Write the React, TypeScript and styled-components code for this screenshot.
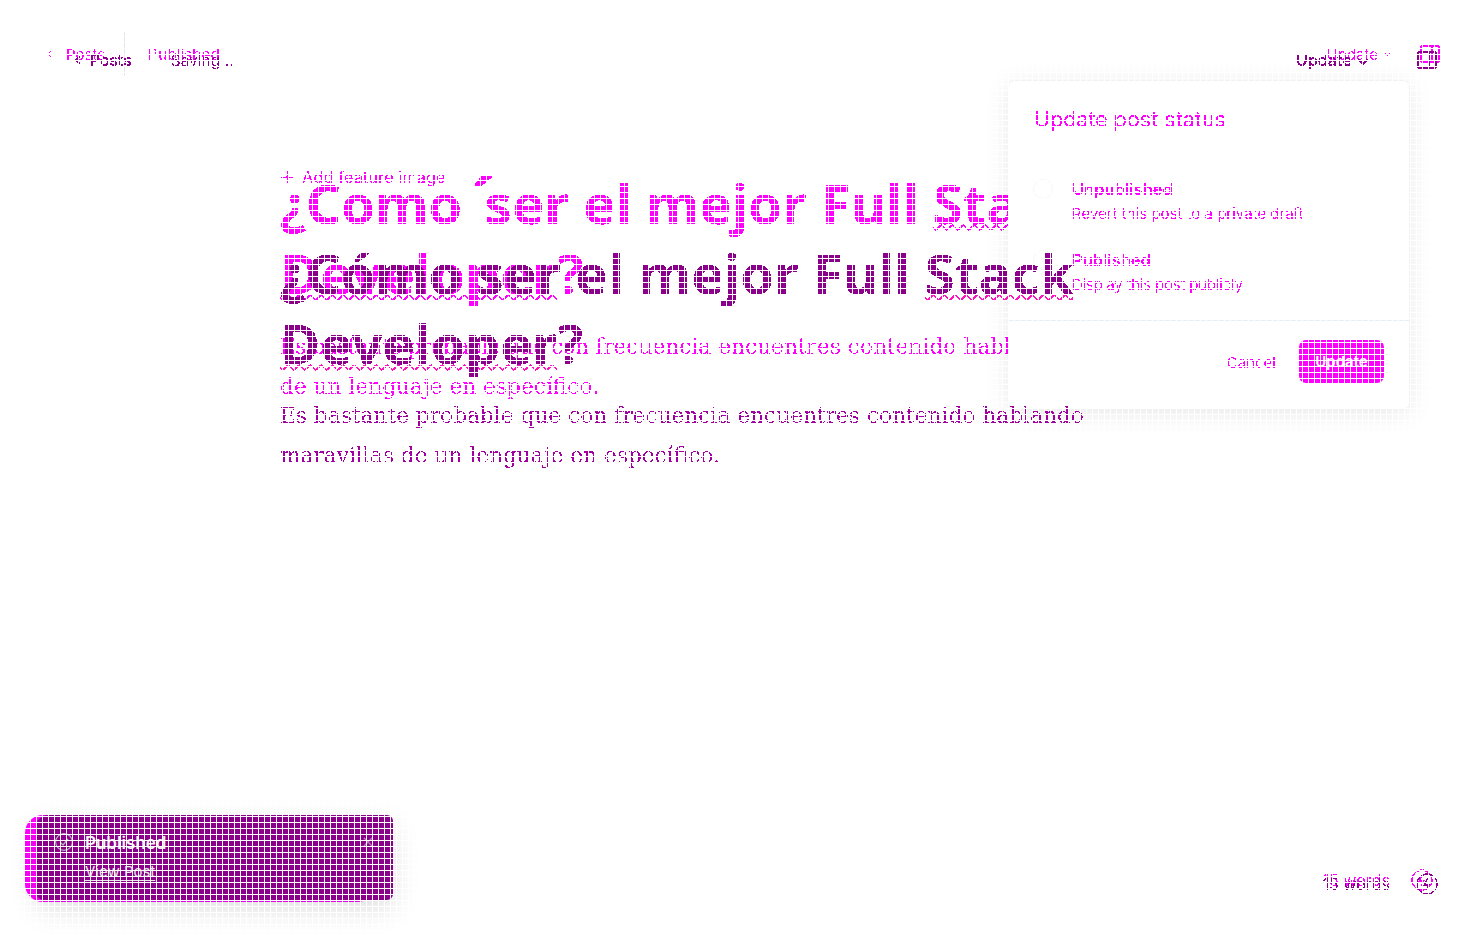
import React from "react";
import styled, { createGlobalStyle, css } from "styled-components";

const Global = createGlobalStyle`
  html, body { margin: 0; padding: 0; background: #fff; }
  body { font-family: Inter, "Liberation Sans", sans-serif; overflow: hidden; }
`;

const MAGENTA = "#ff00ff";
const PURPLE = "#8b008b";
type Tone = { $b?: boolean };
const ink = (p: Tone) => (p.$b ? PURPLE : MAGENTA);
const hard = css`filter: url(#hard);`;

const Page = styled.div`
  position: relative;
  width: 1483px;
  height: 938px;
  overflow: hidden;
  background: #fff;
`;
const Layer = styled.div`
  position: absolute;
  inset: 0;
  display: flex;
  flex-direction: column;
`;
const GridVeil = styled.div`
  position: absolute;
  inset: 0;
  pointer-events: none;
  background-image:
    linear-gradient(to right, #fff 1px, transparent 1px),
    linear-gradient(to bottom, #fff 1px, transparent 1px);
  background-size: 6px 6px;
`;
const Header = styled.header<Tone>`
  height: ${(p) => (p.$b ? 120 : 108)}px;
  flex: none;
  display: flex;
  align-items: center;
  justify-content: space-between;
  padding: ${(p) => (p.$b ? "0 46px 0 72px" : "0 43px 0 45px")};
`;
const Side = styled.div`
  display: flex;
  align-items: center;
`;
const BackLink = styled.span<Tone>`
  ${hard}
  display: flex;
  align-items: center;
  gap: ${(p) => (p.$b ? 6 : 11)}px;
  color: ${ink};
  font-size: ${(p) => (p.$b ? 15.5 : 15)}px;
  font-weight: ${(p) => (p.$b ? 600 : 400)};
`;
const Divider = styled.span<Tone>`
  display: block;
  width: 1px;
  height: 44px;
  background: ${(p) => (p.$b ? "transparent" : "#e6e6e6")};
  margin: ${(p) => (p.$b ? "0 19px 0 19px" : "0 23px 0 19px")};
`;
const State = styled.span<Tone>`
  ${hard}
  color: ${ink};
  font-size: 15.5px;
`;
const UpdateToggle = styled.span<Tone>`
  ${hard}
  display: flex;
  align-items: center;
  gap: 5px;
  color: ${ink};
  font-size: ${(p) => (p.$b ? 16 : 15)}px;
  font-weight: ${(p) => (p.$b ? 600 : 400)};
  margin-right: ${(p) => (p.$b ? 48 : 27)}px;
`;
const PanelIcon = styled.svg<Tone>`
  ${hard}
  width: 20px;
  height: ${(p) => (p.$b ? 18 : 22)}px;
  color: ${ink};
  fill: none;
  stroke: currentColor;
  stroke-width: 2;
`;
const Canvas = styled.main<Tone>`
  flex: 1;
  padding: ${(p) => (p.$b ? "118px 0 0 280px" : "60px 0 0 280px")};
  width: ${(p) => (p.$b ? 820 : 920)}px;
`;
const FeatureRow = styled.div`
  ${hard}
  display: flex;
  align-items: center;
  gap: 8px;
  height: 18px;
  margin-bottom: -18px;
  color: ${MAGENTA};
  font-size: 16.5px;
`;
const Title = styled.h1<Tone>`
  ${hard}
  margin: 0;
  max-width: 815px;
  font-family: "Noto Sans", "Liberation Sans", sans-serif;
  font-size: 54.55px;
  line-height: 70px;
  font-weight: 700;
  color: ${ink};
`;
const Misspelt = styled.span<Tone>`
  text-decoration: underline wavy ${(p) => (p.$b ? "#ff10c0" : MAGENTA)} 1.5px;
  text-underline-offset: 0;
  text-decoration-skip-ink: none;
`;
const Accent = styled.span`
  position: relative;
  top: 4px;
  display: inline-block;
  width: 8px;
  font-size: 68px;
  line-height: 0;
  text-indent: 8px;
`;
const Body = styled.p<Tone>`
  ${hard}
  margin: ${(p) => (p.$b ? 18 : 19)}px 0 0;
  font-family: "DejaVu Serif", serif;
  font-size: 21.7px;
  line-height: 40px;
  color: ${(p) => (p.$b ? "#a000a0" : MAGENTA)};
`;
const TightRun = styled.span`
  letter-spacing: -0.68px;
`;
const Footer = styled.footer<Tone>`
  height: ${(p) => (p.$b ? 108 : 116)}px;
  flex: none;
  display: flex;
  align-items: center;
  justify-content: flex-end;
  gap: ${(p) => (p.$b ? 26 : 21)}px;
  padding-right: ${(p) => (p.$b ? 45 : 50)}px;
`;
const WordCount = styled.span<Tone>`
  ${hard}
  color: ${ink};
  font-size: 16.1px;
`;
const HelpIcon = styled.svg<Tone>`
  ${hard}
  width: 22px;
  height: 22px;
  color: ${ink};
  fill: none;
  stroke: currentColor;
  stroke-width: 1.3;
`;

const Dialog = styled.section`
  position: absolute;
  left: 1008px;
  top: 80px;
  width: 402px;
  height: 330px;
  box-sizing: border-box;
  display: flex;
  flex-direction: column;
  background: #fff;
  border: 1px solid #f1f1f4;
  border-radius: 7px;
  box-shadow: 0 4px 26px rgba(0, 0, 0, 0.09);
`;
const DialogHead = styled.h2`
  ${hard}
  margin: 0;
  height: 70px;
  box-sizing: border-box;
  display: flex;
  align-items: center;
  padding: 6px 0 0 25px;
  font-size: 21.5px;
  font-weight: 400;
  color: ${MAGENTA};
  border-bottom: 1px solid #eeeef2;
`;
const Options = styled.div`
  flex: 1;
  display: flex;
  flex-direction: column;
  gap: 26px;
  padding: 28px 0 0 24px;
  border-bottom: 1px solid #e6eff8;
`;
const Option = styled.div`
  display: flex;
  gap: 19px;
`;
const Radio = styled.span`
  flex: none;
  width: 20px;
  height: 20px;
  border-radius: 50%;
  border: 1px solid #f6f6f6;
  box-sizing: border-box;
`;
const OptionText = styled.div`
  display: flex;
  flex-direction: column;
  gap: 5px;
`;
const OptionName = styled.span`
  ${hard}
  font-size: 16.5px;
  line-height: 20px;
  font-weight: 600;
  color: ${MAGENTA};
`;
const OptionNote = styled.span<{ $snug?: boolean }>`
  ${hard}
  font-size: 15px;
  line-height: 20px;
  letter-spacing: ${(p) => (p.$snug ? "-0.2px" : "0")};
  color: ${MAGENTA};
`;
const DialogFoot = styled.div`
  height: 88px;
  flex: none;
  box-sizing: border-box;
  padding: 0 25px 7px 0;
  display: flex;
  align-items: center;
  justify-content: flex-end;
  gap: 23px;
`;
const CancelButton = styled.span`
  ${hard}
  font-size: 15px;
  margin-top: 1px;
  color: ${MAGENTA};
`;
const ConfirmButton = styled.span`
  width: 85px;
  height: 43px;
  display: flex;
  align-items: center;
  justify-content: center;
  border-radius: 7px;
  background: ${MAGENTA};
  color: #fff;
  font-size: 15px;
  font-weight: 600;
`;

const Toast = styled.div<Tone>`
  position: absolute;
  box-sizing: border-box;
  ${(p) =>
    p.$b
      ? css`
          left: 36px;
          top: 815px;
          width: 357px;
          height: 85px;
          border-radius: 12px 6px 6px 8px;
          background: ${PURPLE};
          box-shadow: 0 10px 28px rgba(0, 0, 0, 0.13);
        `
      : css`
          left: 25px;
          top: 815px;
          width: 350px;
          height: 87px;
          border-radius: 18px;
          background: ${MAGENTA};
        `}
`;
const ToastRow = styled.div`
  display: flex;
  gap: 12px;
  padding: 18px 20px 0 19px;
`;
const ToastText = styled.div`
  flex: 1;
  display: flex;
  flex-direction: column;
  gap: 9px;
`;
const ToastTitle = styled.span`
  font-size: 17px;
  line-height: 20px;
  font-weight: 600;
  color: #f4f4f4;
`;
const ToastLink = styled.span`
  font-size: 15px;
  line-height: 20px;
  color: #e8e8e8;
  text-decoration: underline;
  text-underline-offset: 3px;
`;
const ToastIcon = styled.svg`
  width: 18px;
  height: 20px;
  flex: none;
  fill: none;
  stroke: #b9b9b9;
  stroke-width: 1.2;
`;
const CloseIcon = styled.svg`
  width: 10px;
  height: 10px;
  margin-top: 4px;
  flex: none;
  fill: none;
  stroke: #b080b0;
  stroke-width: 1.4;
`;
const HiddenDefs = styled.svg`
  position: absolute;
  width: 0;
  height: 0;
`;

const Chevron = ({ dir, bold }: { dir: "left" | "down"; bold?: boolean }) => (
  <svg width={bold ? 12 : 10} height="12" viewBox="0 0 12 12" fill="none" stroke="currentColor" strokeWidth={bold ? 2.2 : 1.2}>
    {dir === "left" ? <path d="M8 2L4 6l4 4" /> : bold ? <path d="M1 5l5 5 5-5" /> : <path d="M1 4l4 4 4-4" />}
  </svg>
);
const Panel = ({ $b }: Tone) => (
  <PanelIcon $b={$b} viewBox={$b ? "0 0 20 18" : "0 -2 20 22"}>
    <rect x="1" y="1" width="18" height="16" rx="1" />
    <path d="M12 1v16" />
  </PanelIcon>
);
const Help = ({ $b }: Tone) => (
  <HelpIcon $b={$b} viewBox="0 0 22 22">
    <circle cx="11" cy="11" r="10" />
    <path d="M12 5L8 12h5l-3 5" />
  </HelpIcon>
);

const EditorLayer = ({ $b }: Tone) => (
  <Layer>
    <Header $b={$b}>
      <Side>
        <BackLink $b={$b}>
          <Chevron dir="left" bold={$b} />
          Posts
        </BackLink>
        <Divider $b={$b} />
        <State $b={$b}>{$b ? "Saving..." : "Published"}</State>
      </Side>
      <Side>
        <UpdateToggle $b={$b}>
          Update
          <Chevron dir="down" bold={$b} />
        </UpdateToggle>
        <Panel $b={$b} />
      </Side>
    </Header>
    <Canvas $b={$b}>
      {!$b && (
        <FeatureRow>
          <svg width="14" height="14" viewBox="0 0 14 14" stroke="currentColor" strokeWidth="1">
            <path d="M7 1v12M1 7h12" />
          </svg>
          Add feature image
        </FeatureRow>
      )}
      <Title $b={$b}>
        {$b ? "¿Cómo" : <>¿Como<Accent>´</Accent></>} ser el mejor Full <Misspelt $b={$b}>Stack</Misspelt>{" "}
        <Misspelt $b={$b}>Developer</Misspelt>?
      </Title>
      <Body $b={$b}>
        {$b ? "Es bastante probable que con" : <TightRun>Es bastante probable que con</TightRun>} frecuencia encuentres
        contenido hablando maravillas de un lenguaje en específico.
      </Body>
    </Canvas>
    <Footer $b={$b}>
      <WordCount $b={$b}>15 words</WordCount>
      <Help $b={$b} />
    </Footer>
  </Layer>
);

export default function App() {
  return (
    <Page>
      <Global />
      <HiddenDefs aria-hidden="true">
        <filter id="hard" colorInterpolationFilters="sRGB" x="-5%" y="-20%" width="110%" height="140%">
          <feComponentTransfer>
            <feFuncA type="discrete" tableValues="0 1" />
          </feComponentTransfer>
        </filter>
      </HiddenDefs>
      <EditorLayer />
      <Dialog>
        <DialogHead>Update post status</DialogHead>
        <Options>
          <Option>
            <Radio />
            <OptionText>
              <OptionName>Unpublished</OptionName>
              <OptionNote>Revert this post to a private draft</OptionNote>
            </OptionText>
          </Option>
          <Option>
            <Radio />
            <OptionText>
              <OptionName>Published</OptionName>
              <OptionNote $snug>Display this post publicly</OptionNote>
            </OptionText>
          </Option>
        </Options>
        <DialogFoot>
          <CancelButton>Cancel</CancelButton>
          <ConfirmButton>Update</ConfirmButton>
        </DialogFoot>
      </Dialog>
      <Toast />
      <EditorLayer $b />
      <Toast $b>
        <ToastRow>
          <ToastIcon viewBox="0 0 18 20">
            <circle cx="9" cy="9" r="8.4" />
            <path d="M5 9l3 3 5-6" />
          </ToastIcon>
          <ToastText>
            <ToastTitle>Published</ToastTitle>
            <ToastLink>View Post</ToastLink>
          </ToastText>
          <CloseIcon viewBox="0 0 10 10">
            <path d="M1 1l8 8M9 1L1 9" />
          </CloseIcon>
        </ToastRow>
      </Toast>
      <GridVeil />
    </Page>
  );
}
